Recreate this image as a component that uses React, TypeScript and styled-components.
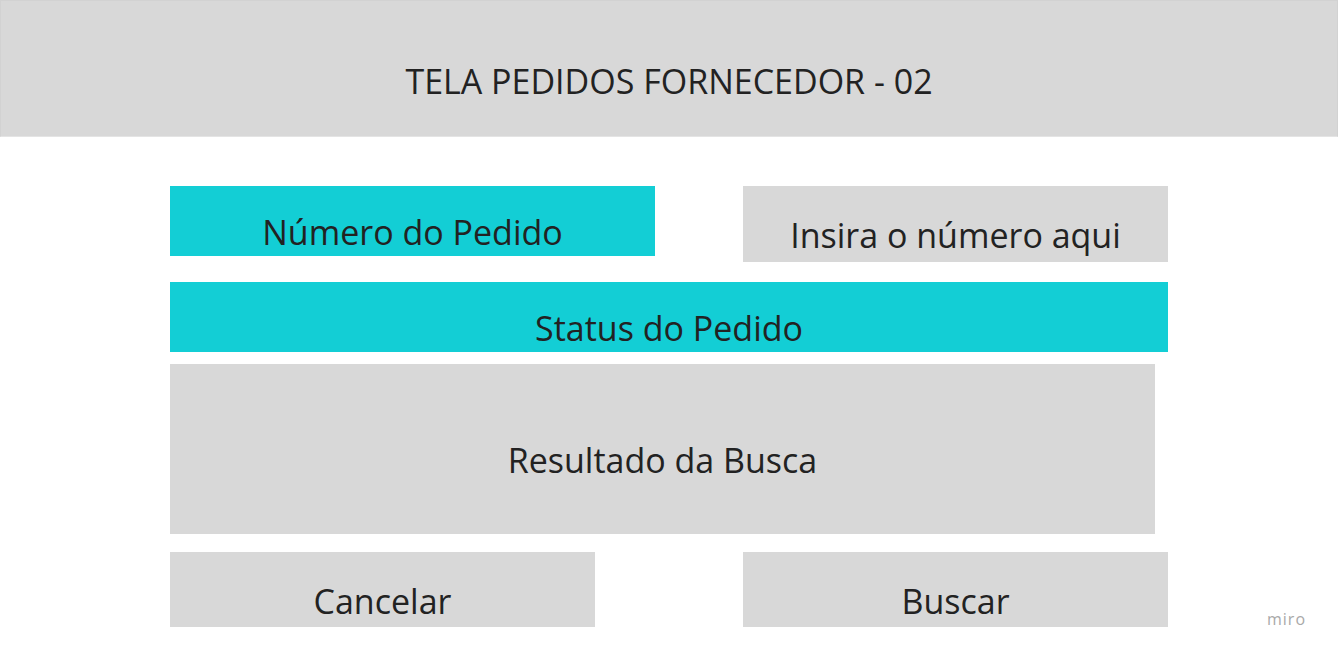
import styled, { createGlobalStyle } from "styled-components"

const GlobalStyle = createGlobalStyle`
  html, body {
    margin: 0;
    padding: 0;
    background: #ffffff;
  }
  body {
    font-family: "Open Sans", "Noto Sans", sans-serif;
    color: #222222;
  }
`

const Page = styled.div`
  position: relative;
  width: 1338px;
  height: 656px;
  overflow: hidden;
  background: #ffffff;
`

const Header = styled.header`
  height: 137px;
  box-sizing: border-box;
  background: #d8d8d8;
  border: 1px solid #d2d2d2;
  border-bottom-color: #e4e4e4;
  display: flex;
  align-items: center;
  justify-content: center;
  padding-top: 24px;
  font-size: 34px;
  color: #222222;
`

const Board = styled.main`
  margin: 49px 0 0 170px;
  width: 998px;
  display: flex;
  flex-direction: column;
`

const Row = styled.div<{ $gap: number }>`
  display: flex;
  justify-content: space-between;
  align-items: flex-start;
  margin-bottom: ${(p) => p.$gap}px;
`

const Block = styled.div<{ $w: number; $h: number; $accent?: boolean; $gap?: number }>`
  width: ${(p) => p.$w}px;
  height: ${(p) => p.$h}px;
  box-sizing: border-box;
  background: ${(p) => (p.$accent ? "#13ced5" : "#d8d8d8")};
  display: flex;
  align-items: center;
  justify-content: center;
  padding-top: 22px;
  margin-bottom: ${(p) => p.$gap ?? 0}px;
  font-size: 34px;
  color: #222222;
  white-space: nowrap;
`

const Watermark = styled.div`
  position: absolute;
  right: 32px;
  bottom: 26px;
  font-size: 16px;
  letter-spacing: 1px;
  color: #a9a9a9;
`

export default function App() {
  return (
    <Page>
      <GlobalStyle />
      <Header>TELA PEDIDOS FORNECEDOR - 02</Header>
      <Board>
        <Row $gap={20}>
          <Block $w={485} $h={70} $accent>
            Número do Pedido
          </Block>
          <Block $w={425} $h={76}>
            Insira o número aqui
          </Block>
        </Row>
        <Block $w={998} $h={70} $accent $gap={12}>
          Status do Pedido
        </Block>
        <Block $w={985} $h={170} $gap={18}>
          Resultado da Busca
        </Block>
        <Row $gap={0}>
          <Block $w={425} $h={75}>
            Cancelar
          </Block>
          <Block $w={425} $h={75}>
            Buscar
          </Block>
        </Row>
      </Board>
      <Watermark>miro</Watermark>
    </Page>
  )
}
